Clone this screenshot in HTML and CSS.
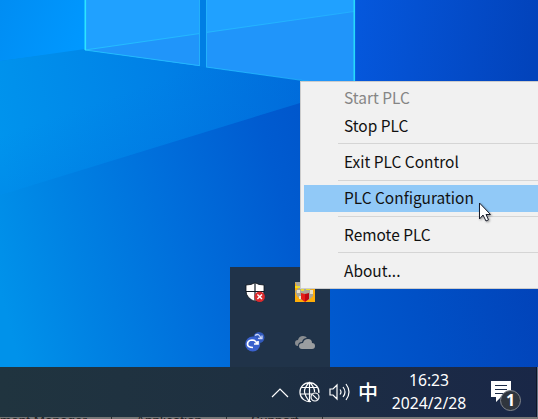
FILE: index.html
```html
<!DOCTYPE html>
<html lang="zh-CN">
<head>
<meta charset="utf-8">
<title>Desktop</title>
<link rel="stylesheet" href="styles.css">
</head>
<body>
<main class="desktop">
  <svg class="wallpaper" viewBox="0 0 538 367" aria-hidden="true">
    <defs>
      <linearGradient id="sky" gradientUnits="userSpaceOnUse" x1="0" y1="290" x2="520" y2="160">
        <stop offset="0" stop-color="#0092ea"/><stop offset=".15" stop-color="#0082e3"/><stop offset=".35" stop-color="#006edb"/><stop offset=".55" stop-color="#005bd0"/><stop offset=".75" stop-color="#0050c6"/><stop offset="1" stop-color="#0242b8"/>
      </linearGradient>
      <linearGradient id="beam" gradientUnits="userSpaceOnUse" x1="0" y1="150" x2="310" y2="90">
        <stop offset="0" stop-color="#0094ed"/><stop offset=".55" stop-color="#0080e6"/><stop offset="1" stop-color="#006cdb"/>
      </linearGradient>
      <linearGradient id="fade" gradientUnits="userSpaceOnUse" x1="130" y1="90" x2="160" y2="175">
        <stop offset="0" stop-color="#0066d8" stop-opacity="0"/><stop offset="1" stop-color="#0066d8" stop-opacity=".25"/>
      </linearGradient>
      <linearGradient id="corner" gradientUnits="userSpaceOnUse" x1="0" y1="0" x2="84" y2="40">
        <stop offset="0" stop-color="#008df3"/><stop offset="1" stop-color="#0098ff"/>
      </linearGradient>
      <linearGradient id="right" gradientUnits="userSpaceOnUse" x1="355" y1="0" x2="538" y2="20">
        <stop offset="0" stop-color="#0558dd"/><stop offset="1" stop-color="#0243bb"/>
      </linearGradient>
      <linearGradient id="ray" gradientUnits="userSpaceOnUse" x1="85" y1="0" x2="354" y2="0">
        <stop offset="0" stop-color="#25cbff"/><stop offset="1" stop-color="#24b4ff"/>
      </linearGradient>
    </defs>
    <path fill="url(#sky)" d="M0 0h538v367H0z"/>
    <path fill="url(#corner)" d="M0 0h86v50L0 61z"/>
    <path fill="url(#beam)" d="M0 61 85 49 300 80v23L0 195z"/>
    <path fill="url(#fade)" d="M0 61 85 49 300 80v23L0 195z"/>
    <path fill="url(#right)" d="M355 0h183v82H355z"/>
    <path fill="#0075df" d="M300 78 354 85H300z"/>
    <path fill="#20a1ff" d="M85 0h115v66L85 50zM206 0h148v87L206 67z"/>
    <path fill="#2095fa" d="M85 50 200 33.500V66zM206 32.500 354 11.500V87L206 67z"/>
    <path fill="none" stroke="url(#ray)" stroke-opacity=".75" d="M85 50 200 33.500M206 32.500 354 11.500M85 50 200 65.700M206 67 310 81.500"/>
    <path fill="#007ee4" d="M200 0h6v67.500l-6-1z"/>
    <path fill="none" stroke="#24b1fb" d="M199.500 0v66M206.500 0v67"/>
    <path fill="none" stroke="#2de4ff" stroke-width="1.600" d="M85.300 0v50"/>
    <path fill="none" stroke="#26dafa" stroke-width="1.600" d="M354.300 0v82"/>
  </svg>

  <section class="overflow">
    <svg class="tray-icon" viewBox="0 0 20 20">
      <path fill="#fff" stroke="#0b1119" stroke-width=".8" d="M10 .7Q13.500 3 19 3v6q0 7-9 10.500Q1 16 1 9V3Q6.500 3 10 .7z"/>
      <path fill="none" stroke="#111923" stroke-width="1.200" d="M10 1v18M1 9.500h18"/>
      <circle cx="14.700" cy="14.700" r="5.200" fill="#dc2a2d"/>
      <path stroke="#fff" stroke-width="1.400" d="m12.400 12.400 4.600 4.600m0-4.600-4.600 4.600"/>
    </svg>
    <svg class="tray-icon" viewBox="0 0 20 20">
      <path fill="#ffae08" d="M0 0h20v20H0z"/>
      <path fill="#aaa79b" d="M0 0h7v7h7l4 1v6l-4 4H6l-4-4-2-5 3-2z"/>
      <path fill="#e9e2c9" d="M2 8h3v3H2zM15 8h3v4h-3zM4 14h2v3H4z"/>
      <path stroke="#ffed16" stroke-width="1.500" d="M0 5h5M6 8h3M11 7h4"/>
      <path fill="#e51c18" d="m6 11 4 1v8l-4-3z"/><path fill="#c00512" d="m10 12 4-1v6l-4 3z"/>
    </svg>
    <svg class="tray-icon" viewBox="0 0 20 20">
      <circle cx="14" cy="5.500" r="5.500" fill="#3159bb"/>
      <path fill="none" stroke="#ced9fa" stroke-width="1.300" d="M10 3.500q4-3 6 3m-3 0h4V3.500"/>
      <circle cx="7.700" cy="12" r="7.500" fill="#3a61cd"/>
      <path fill="none" stroke="#fff" stroke-width="1.700" d="M8 15.500q-5.500 0-5.500-3.500t4.500-4q4 0 5 4m-3 0h4V9"/>
    </svg>
    <svg class="tray-icon" viewBox="0 0 20 20">
      <path fill="#898d91" d="M3 14Q0 14 0 11t3-3q1-4 5-4 3 0 4 2-4 0-5 4-4 0-4 4z"/>
      <path fill="#9b9ea0" d="M7 17q-3 0-3-3t4-3q1-4 5-4 4 0 4 4 3 0 3 3t-3 3z"/>
    </svg>
  </section>

  <nav class="menu">
    <div class="item disabled">Start PLC</div>
    <div class="item">Stop PLC</div>
    <hr>
    <div class="item">Exit PLC Control</div>
    <hr>
    <div class="item active">PLC Configuration</div>
    <hr>
    <div class="item">Remote PLC</div>
    <hr>
    <div class="item">About...</div>
  </nav>
  <svg class="cursor" viewBox="0 0 14 22"><path fill="#fff" stroke="#171c2b" d="M.5 1v16l3.500-4 3 6 2.500-1.200-2.500-5.300h4.500z"/></svg>
</main>

<footer class="taskbar">
  <svg class="chevron" viewBox="0 0 18 11"><path d="m1 10 8-8 8 8"/></svg>
  <svg class="globe" viewBox="0 0 22 22">
    <path d="M12 20.500A9.500 9.500 0 1 1 19.900 12M10.500 1Q5 7 5.500 11t5 9.500M10.500 1Q16 7 15.500 11M10.500 1v19M2 6.500h17M1 13h12"/>
    <circle cx="16" cy="16" r="4"/><path d="m13.300 13.300 5.400 5.400"/>
  </svg>
  <svg class="speaker" viewBox="0 0 21 20"><path d="M1 7h3l4-4v14l-4-4H1zM11 7.500q2 2.500 0 5M14 5q4 5 0 10M17 2q6 8 0 16"/></svg>
  <span class="ime">中</span>
  <div class="clock"><time>16:23</time><time>2024/2/28</time></div>
  <div class="notice">
    <svg viewBox="0 0 20 21"><path fill="#fff" d="M0 0h20v16H10l-5 5v-5H0z"/><path stroke="#1b2a46" d="M4 4.500h12M4 8.500h12M4 12.500h9"/></svg>
    <span class="badge">1</span>
  </div>
</footer>
<div class="strip"><span>ment Manager</span><i></i><span>Application</span><i></i><span>Support</span><i></i></div>
</body>
</html>
```

FILE: styles.css
```css
* { box-sizing: border-box; }
body {
  width: 538px;
  height: 419px;
  margin: 0;
  overflow: hidden;
  display: grid;
  grid-template-rows: 367px 50px 2px;
  font-family: "Noto Sans", "Noto Sans CJK SC", sans-serif;
}
.desktop { position: relative; }
.wallpaper { display: block; width: 538px; height: 367px; }
.overflow {
  position: absolute;
  left: 230px;
  bottom: 0;
  width: 100px;
  height: 100px;
  display: grid;
  grid-template: 50px 50px / 50px 50px;
  place-items: center;
  background: #203349;
}
.tray-icon { width: 20px; height: 20px; }
.menu {
  position: absolute;
  left: 300px;
  top: 81px;
  width: 260px;
  height: 208px;
  padding: 2.700px 3px;
  border: 1px solid #ccc;
  background: #f1f1f1;
  color: #111;
  font: 15.450px/26.300px "Noto Sans CJK SC", sans-serif;
}
.item { height: 27.300px; padding-left: 40px; white-space: nowrap; }
.disabled { color: #858585; line-height: 25.800px; }
.active { background: #91c9f7; line-height: 25.800px; }
.menu hr {
  height: 1px;
  margin: 4px 0 4px 34px;
  border: 0;
  background: #d5d5d5;
}
.cursor {
  position: absolute;
  left: 479px;
  top: 202px;
  width: 14px;
  height: 22px;
  filter: drop-shadow(1px 1px 1px #0006);
}
.taskbar {
  display: flex;
  align-items: center;
  padding-left: 271px;
  background: linear-gradient(90deg, #20343f, #1e3041 45%, #1b2a46 80%, #192747);
  color: #fff;
  box-shadow: inset -1px 0 #667386, inset -2px 0 #0d1628;
}
.chevron, .globe, .speaker { fill: none; stroke: #fff; stroke-width: 1.200; }
.chevron { width: 18px; height: 11px; margin-right: 10px; }
.globe { width: 22px; height: 22px; margin-right: 8px; }
.speaker { width: 21px; height: 20px; margin-right: 8px; }
.ime { width: 20px; font: 500 20px/30px "Noto Sans CJK SC", sans-serif; }
.clock {
  width: 98px;
  margin-left: 2px;
  display: grid;
  justify-items: center;
  font: 15.700px/23px "Noto Sans", sans-serif;
}
.notice { position: relative; width: 32px; height: 34px; padding-top: 6px; margin-left: 13px; }
.notice svg { display: block; width: 20px; height: 21px; }
.badge {
  position: absolute;
  left: 9px;
  top: 15px;
  width: 21px;
  height: 21px;
  border: 1px solid #80858c;
  border-radius: 50%;
  background: #30363e;
  font: bold 16px/19px "Noto Sans", sans-serif;
  text-align: center;
}
.strip {
  display: flex;
  overflow: hidden;
  background: #777;
  color: #222;
  font: 13.500px/8px "Liberation Sans", sans-serif;
  white-space: nowrap;
}
.strip i { width: 1px; margin: 0 24px; background: #333; }
```
